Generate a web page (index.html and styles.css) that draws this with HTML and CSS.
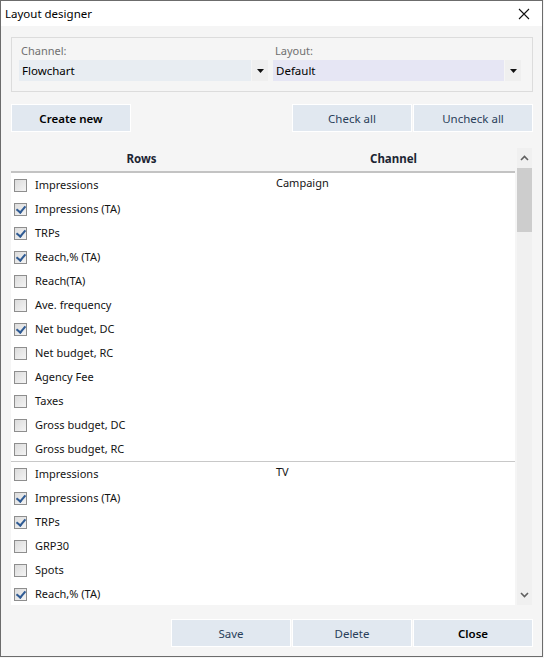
FILE: index.html
```html
<!DOCTYPE html>
<html>
<head>
<meta charset="utf-8">
<link rel="stylesheet" href="styles.css">
</head>
<body>
<div class="window">
  <div class="titlebar">
    <span class="title">Layout designer</span>
    <svg class="close" width="12" height="12" viewBox="0 0 12 12"><path d="M1 1 L11 11 M11 1 L1 11" stroke="#111" stroke-width="1.1" fill="none"/></svg>
  </div>
  <div class="content">
    <div class="group">
      <div class="field">
        <div class="label">Channel:</div>
        <div class="combo combo-blue"><span class="value">Flowchart</span><span class="arrow"><svg width="7" height="4" viewBox="0 0 7 4"><path d="M0 0 H7 L3.5 4 Z" fill="#111"/></svg></span></div>
      </div>
      <div class="field">
        <div class="label">Layout:</div>
        <div class="combo combo-lav"><span class="value">Default</span><span class="arrow"><svg width="7" height="4" viewBox="0 0 7 4"><path d="M0 0 H7 L3.5 4 Z" fill="#111"/></svg></span></div>
      </div>
    </div>
    <div class="toolbar">
      <button class="btn btn-strong">Create new</button>
      <div class="spacer"></div>
      <button class="btn">Check all</button>
      <button class="btn">Uncheck all</button>
    </div>
    <div class="table">
      <div class="grid">
        <div class="head">
          <div class="hcell hcol1">Rows</div>
          <div class="hcell hcol2">Channel</div>
        </div>
        <div class="body">
          <div class="grp">
            <div class="rows">
              <div class="row"><span class="cb"></span>Impressions</div>
              <div class="row"><span class="cb on"></span>Impressions (TA)</div>
              <div class="row"><span class="cb on"></span>TRPs</div>
              <div class="row"><span class="cb on"></span>Reach,% (TA)</div>
              <div class="row"><span class="cb"></span>Reach(TA)</div>
              <div class="row"><span class="cb"></span>Ave. frequency</div>
              <div class="row"><span class="cb on"></span>Net budget, DC</div>
              <div class="row"><span class="cb"></span>Net budget, RC</div>
              <div class="row"><span class="cb"></span>Agency Fee</div>
              <div class="row"><span class="cb"></span>Taxes</div>
              <div class="row"><span class="cb"></span>Gross budget, DC</div>
              <div class="row"><span class="cb"></span>Gross budget, RC</div>
            </div>
            <div class="chan">Campaign</div>
          </div>
          <div class="grp">
            <div class="rows">
              <div class="row"><span class="cb"></span>Impressions</div>
              <div class="row"><span class="cb on"></span>Impressions (TA)</div>
              <div class="row"><span class="cb on"></span>TRPs</div>
              <div class="row"><span class="cb"></span>GRP30</div>
              <div class="row"><span class="cb"></span>Spots</div>
              <div class="row"><span class="cb on"></span>Reach,% (TA)</div>
            </div>
            <div class="chan">TV</div>
          </div>
        </div>
      </div>
      <div class="scrollbar">
        <div class="sb-btn"><svg width="9" height="6" viewBox="0 0 9 6"><path d="M1 5 L4.5 1.5 L8 5" stroke="#606060" stroke-width="1.6" fill="none"/></svg></div>
        <div class="sb-track"><div class="sb-thumb"></div></div>
        <div class="sb-btn"><svg width="9" height="6" viewBox="0 0 9 6"><path d="M1 1 L4.5 4.5 L8 1" stroke="#606060" stroke-width="1.6" fill="none"/></svg></div>
      </div>
    </div>
    <div class="footer">
      <button class="btn">Save</button>
      <button class="btn">Delete</button>
      <button class="btn btn-strong">Close</button>
    </div>
  </div>
</div>
</body>
</html>
```
FILE: styles.css
```css
* { box-sizing: border-box; }
html, body { margin: 0; padding: 0; }
body {
  width: 544px;
  height: 658px;
  background: #f5f5f5;
  font-family: "Noto Sans", "Open Sans", sans-serif;
  font-size: 11px;
  color: #141414;
  overflow: hidden;
}
.window {
  width: 543px;
  height: 657px;
  border: 1px solid #6c6c6c;
  background: #f5f5f5;
  display: flex;
  flex-direction: column;
}
.titlebar {
  height: 25px;
  background: #ffffff;
  display: flex;
  align-items: center;
  justify-content: space-between;
  padding: 0 12px 0 4px;
  flex: none;
}
.title { font-size: 11.5px; color: #000; }
.content {
  flex: 1;
  padding: 11px 9px 0 10px;
  display: flex;
  flex-direction: column;
}
.group {
  height: 55px;
  border: 1px solid #dcdcdc;
  padding: 4px 11px 0 7px;
  display: grid;
  grid-template-columns: 249px 248px;
  column-gap: 5px;
}
.label {
  color: #707070;
  height: 18px;
  line-height: 18px;
  padding-left: 2px;
}
.combo {
  height: 21px;
  display: flex;
  align-items: stretch;
}
.combo .value {
  flex: 1;
  padding-left: 3px;
  line-height: 21px;
  color: #000;
  font-size: 11.5px;
}
.combo-blue .value { background: #e8edf2; }
.combo-lav .value { background: #e6e6f4; }
.combo .arrow {
  width: 16px;
  margin-left: 1px;
  background: #efefef;
  display: flex;
  align-items: center;
  justify-content: center;
}
.toolbar {
  margin-top: 12px;
  height: 28px;
  display: flex;
  gap: 1px;
}
.spacer { flex: 1; }
.btn {
  width: 120px;
  height: 28px;
  border: 1px solid #ffffff;
  background: #e1e8f0;
  font-family: inherit;
  font-size: 11.5px;
  color: #2a3f5a;
  padding: 0;
  margin: 0;
}
.btn-strong { color: #000; font-weight: 600; }
.table {
  margin-top: 15px;
  height: 458px;
  display: flex;
  gap: 2px;
}
.grid {
  width: 504px;
  display: flex;
  flex-direction: column;
  overflow: hidden;
}
.head {
  height: 26px;
  flex: none;
  display: grid;
  grid-template-columns: 261px 243px;
  border-bottom: 2px solid #c3c3c3;
  background: #f5f5f5;
}
.hcell {
  font-weight: 700;
  font-size: 11.5px;
  color: #1c2533;
  text-align: center;
  line-height: 24px;
}
.body {
  flex: 1;
  background: #ffffff;
  overflow: hidden;
}
.grp {
  display: grid;
  grid-template-columns: 261px 243px;
  border-bottom: 1px solid #c8c8c8;
}
.grp + .grp { border-bottom: none; }
.row {
  height: 24px;
  display: flex;
  align-items: center;
  padding: 0 0 1px 3px;
  gap: 8px;
}
.cb {
  width: 13px;
  height: 13px;
  border: 1px solid #8e8e8e;
  background: linear-gradient(135deg, #dcdcdc, #f4f4f4);
  position: relative;
  flex: none;
  margin-top: 1px;
}
.cb.on::after {
  content: "";
  position: absolute;
  left: 3px;
  top: 0px;
  width: 4px;
  height: 7px;
  border: solid #2f5b94;
  border-width: 0 2px 2px 0;
  transform: rotate(40deg);
}
.chan {
  padding: 2px 0 0 4px;
}
.scrollbar {
  width: 15px;
  background: #f0f0f0;
  display: flex;
  flex-direction: column;
  margin-top: 1px;
}
.sb-btn {
  height: 20px;
  display: flex;
  align-items: center;
  justify-content: center;
}
.sb-track { flex: 1; }
.sb-thumb {
  height: 64px;
  background: #cdcdcd;
}
.footer {
  margin-top: 14px;
  display: flex;
  justify-content: flex-end;
  gap: 1px;
}
```
